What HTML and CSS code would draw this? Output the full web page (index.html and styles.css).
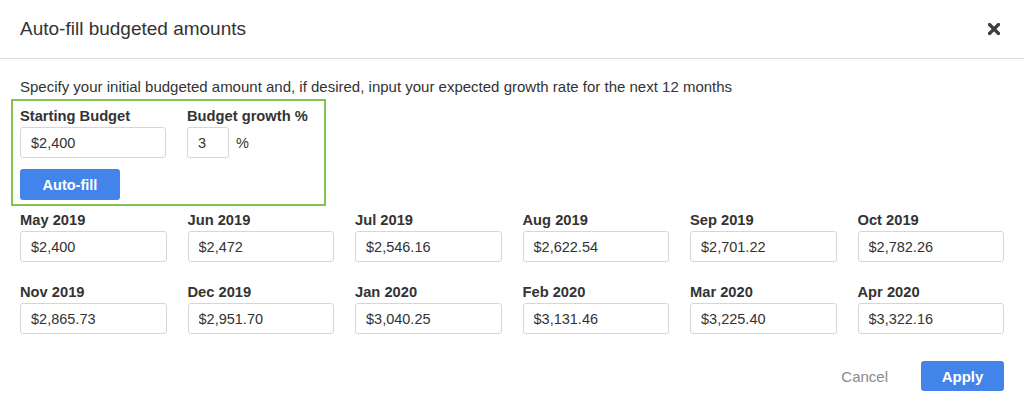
FILE: index.html
```html
<!DOCTYPE html>
<html lang="en">
<head>
  <meta charset="UTF-8">
  <title>Auto-fill budgeted amounts</title>
  <link rel="stylesheet" href="styles.css">
</head>
<body>
  <div class="modal">
    <div class="modal-header">
      <h1>Auto-fill budgeted amounts</h1>
      <button class="close-btn" aria-label="Close">
        <svg width="12" height="12" viewBox="0 0 12 12">
          <path d="M1.5 1.5 L10.5 10.5 M10.5 1.5 L1.5 10.5" stroke="#3d3d3d" stroke-width="3.2" stroke-linecap="round"/>
        </svg>
      </button>
    </div>

    <div class="modal-body">
      <p class="intro">Specify your initial budgeted amount and, if desired, input your expected growth rate for the next 12 months</p>

      <div class="autofill-box">
        <div class="autofill-fields">
          <div class="field start-field">
            <label>Starting Budget</label>
            <input type="text" value="$2,400">
          </div>
          <div class="field">
            <label>Budget growth %</label>
            <div class="growth-row">
              <input type="text" class="small-input" value="3">
              <span>%</span>
            </div>
          </div>
        </div>
        <button class="btn-primary autofill-btn">Auto-fill</button>
      </div>

      <div class="month-grid">
        <div class="field"><label>May 2019</label><input type="text" value="$2,400"></div>
        <div class="field"><label>Jun 2019</label><input type="text" value="$2,472"></div>
        <div class="field"><label>Jul 2019</label><input type="text" value="$2,546.16"></div>
        <div class="field"><label>Aug 2019</label><input type="text" value="$2,622.54"></div>
        <div class="field"><label>Sep 2019</label><input type="text" value="$2,701.22"></div>
        <div class="field"><label>Oct 2019</label><input type="text" value="$2,782.26"></div>
        <div class="field"><label>Nov 2019</label><input type="text" value="$2,865.73"></div>
        <div class="field"><label>Dec 2019</label><input type="text" value="$2,951.70"></div>
        <div class="field"><label>Jan 2020</label><input type="text" value="$3,040.25"></div>
        <div class="field"><label>Feb 2020</label><input type="text" value="$3,131.46"></div>
        <div class="field"><label>Mar 2020</label><input type="text" value="$3,225.40"></div>
        <div class="field"><label>Apr 2020</label><input type="text" value="$3,322.16"></div>
      </div>
    </div>

    <div class="modal-footer">
      <button class="btn-link">Cancel</button>
      <button class="btn-primary apply-btn">Apply</button>
    </div>
  </div>
</body>
</html>
```

FILE: styles.css
```css
body {
  margin: 0;
  padding: 0;
  background-color: #fff;
  font-family: "Liberation Sans", Arial, sans-serif;
  color: #333;
}
.modal {
  width: 1024px;
  height: 399px;
  overflow: hidden;
}
.modal-header {
  display: flex;
  align-items: center;
  justify-content: space-between;
  height: 58px;
  padding: 0 20px;
  border-bottom: 1px solid #dcdcdc;
}
.modal-header h1 {
  margin: 0;
  font-size: 19px;
  font-weight: normal;
  color: #333;
}
.close-btn {
  background: none;
  border: none;
  padding: 0;
  margin-right: 4px;
  display: flex;
  cursor: pointer;
}
.modal-body {
  padding: 18px 20px 0;
}
.intro {
  margin: 0;
  font-size: 15px;
  line-height: 20px;
}
.autofill-box {
  box-sizing: border-box;
  width: 315px;
  margin: 2px 0 0 -9px;
  padding: 7px 7px 4px;
  border: 2px solid #86c250;
}
.autofill-fields {
  display: flex;
  gap: 21px;
}
.autofill-fields .start-field {
  width: 146px;
  flex: none;
}
.field label {
  display: block;
  font-size: 14.7px;
  font-weight: bold;
  line-height: 16px;
  margin-bottom: 3px;
  white-space: nowrap;
}
.field input {
  box-sizing: border-box;
  width: 100%;
  height: 31px;
  padding: 0 10px;
  border: 1px solid #d6d6d6;
  border-radius: 3px;
  font-family: inherit;
  font-size: 14.5px;
  color: #333;
}
.growth-row {
  display: flex;
  align-items: center;
  gap: 7px;
  font-size: 14.5px;
}
.growth-row .small-input {
  width: 42px;
}
.btn-primary {
  background-color: #4284ea;
  color: white;
  border: none;
  border-radius: 3px;
  font-family: inherit;
  font-weight: bold;
  font-size: 14.5px;
  cursor: pointer;
}
.autofill-btn {
  width: 100px;
  height: 31px;
  margin-top: 11px;
}
.month-grid {
  display: grid;
  grid-template-columns: repeat(6, 1fr);
  column-gap: 21px;
  row-gap: 22px;
  margin-top: 6px;
}
.modal-footer {
  display: flex;
  justify-content: flex-end;
  align-items: center;
  padding: 27px 20px 0;
}
.btn-link {
  background: none;
  border: none;
  color: #8a8a8a;
  font-family: inherit;
  font-size: 15px;
  padding: 0 16px;
  margin-right: 17px;
  cursor: pointer;
}
.apply-btn {
  width: 83px;
  height: 30px;
  font-size: 15px;
}
```
